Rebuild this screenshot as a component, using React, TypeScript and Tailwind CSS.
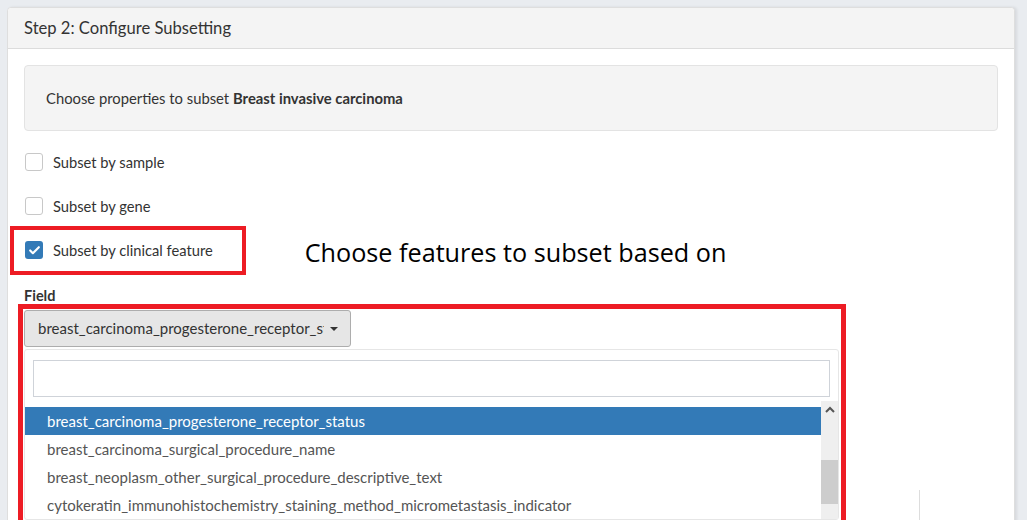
import { Check } from 'lucide-react';

const options = [
  'breast_carcinoma_progesterone_receptor_status',
  'breast_carcinoma_surgical_procedure_name',
  'breast_neoplasm_other_surgical_procedure_descriptive_text',
  'cytokeratin_immunohistochemistry_staining_method_micrometastasis_indicator',
];

const Checkbox = ({ label, checked }: { label: string; checked?: boolean }) => (
  <label className="flex items-center gap-[10px] h-[18px]">
    {checked ? (
      <span className="w-[18px] h-[18px] rounded-[3px] bg-[#337ab7] flex items-center justify-center">
        <Check className="w-[13px] h-[13px] text-white" strokeWidth={4} />
      </span>
    ) : (
      <span className="w-[18px] h-[18px] rounded-[3px] border border-[#c8c8c8] bg-white" />
    )}
    <span className="text-[14.7px] text-[#333]">{label}</span>
  </label>
);

const App = () => {
  return (
    <div className="w-[1027px] h-[520px] overflow-hidden bg-[#e9ecf0] pt-[7px] pl-[7px] font-['Lato',sans-serif]">
      <div className="w-[1008px] h-[600px] bg-white border border-[#dedede] rounded-t-[4px] shadow-[2px_0_3px_rgba(0,0,0,0.08)]">
        {/* Header */}
        <div className="h-[41px] bg-[#f4f4f4] border-b border-[#dcdcdc] rounded-t-[4px] px-[16px] flex items-center">
          <h3 className="text-[16.6px] text-[#333]">Step 2: Configure Subsetting</h3>
        </div>

        <div className="px-[16px] pt-[16px]">
          {/* Well */}
          <div className="h-[66px] bg-[#f4f4f4] border border-[#e3e3e3] rounded-[4px] px-[21px] flex items-center">
            <p className="text-[14.8px] text-[#333]">
              Choose properties to subset <b>Breast invasive carcinoma</b>
            </p>
          </div>

          {/* Checkboxes */}
          <div className="pt-[22px] flex flex-col gap-[26px] pl-[1px]">
            <Checkbox label="Subset by sample" />
            <Checkbox label="Subset by gene" />
            <div className="flex items-center h-[18px]">
              <div className="relative">
                <Checkbox label="Subset by clinical feature" checked />
                <div className="absolute left-[-15px] top-[-15px] w-[236px] h-[49px] border-[4px] border-[#ed1c24]" />
              </div>
              <span className="ml-[92px] mt-[5px] text-[25.2px] text-black font-['Open_Sans',sans-serif] leading-none whitespace-nowrap">
                Choose features to subset based on
              </span>
            </div>
          </div>

          {/* Field */}
          <div className="pt-[28px]">
            <div className="text-[14.5px] font-bold text-[#333] leading-[18px]">Field</div>
            <div className="relative mt-[5px] w-[815px]">
              <div className="absolute left-[-6px] top-[-6px] w-[828px] h-[240px] border-[5px] border-[#ed1c24] pointer-events-none z-10" />
              <button className="h-[37px] w-[327px] bg-[#e6e6e6] border border-[#adadad] rounded-[3px] pl-[13px] pr-[10px] flex items-center gap-[6px] text-[15px] text-[#333]">
                <span className="overflow-hidden whitespace-nowrap w-[286px] text-left">breast_carcinoma_progesterone_receptor_status</span>
                <span className="w-0 h-0 border-l-[4px] border-r-[4px] border-t-[4px] border-l-transparent border-r-transparent border-t-[#333]" />
              </button>
              <div className="mt-[2px] bg-white border border-[#e6e6e6] rounded-[3px]">
                <div className="px-[8px] pt-[10px] pb-[4px]">
                  <div className="h-[37px] border border-[#cfd3d9]" />
                </div>
                <div className="flex">
                  <ul className="flex-1 pt-[6px]">
                    {options.map((o, i) => (
                      <li
                        key={o}
                        className={`h-[28px] pl-[22px] flex items-center text-[15px] whitespace-nowrap ${
                          i === 0 ? 'bg-[#337ab7] text-white' : 'text-[#555]'
                        }`}
                      >
                        {o}
                      </li>
                    ))}
                  </ul>
                  <div className="w-[17px] bg-[#efefef] flex flex-col items-center">
                    <svg width="10" height="7" viewBox="0 0 10 7" className="mt-[5px]">
                      <path d="M1 6 L5 2 L9 6" stroke="#555" strokeWidth="2" fill="none" />
                    </svg>
                    <div className="mt-[47px] w-full h-[44px] bg-[#cdcdcd]" />
                  </div>
                </div>
              </div>
            </div>
          </div>
        </div>
      </div>
      <div className="absolute left-[919px] top-[490px] w-px h-[30px] bg-[#ddd]" />
    </div>
  );
};

export default App;
